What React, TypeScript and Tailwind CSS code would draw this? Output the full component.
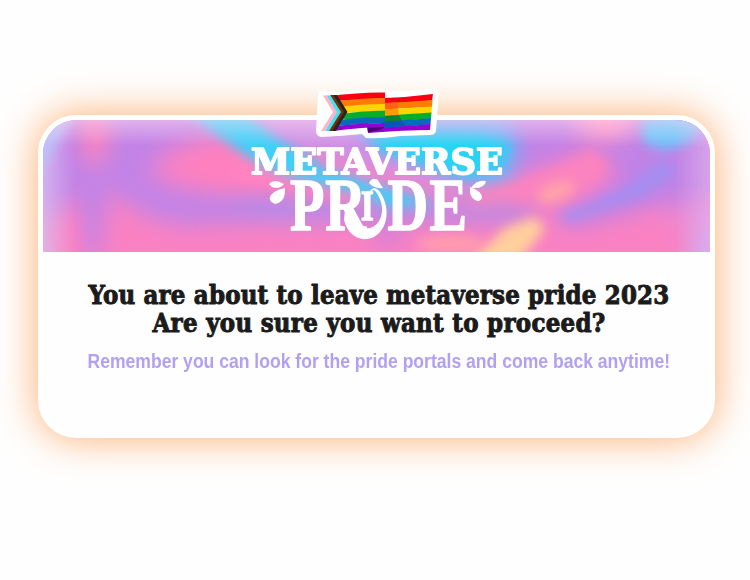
const Backdrop = () => (
  <svg className="block h-full w-full" viewBox="43 120 667 132" preserveAspectRatio="none" aria-hidden="true">
    <defs>
      <filter id="soft" x="-50%" y="-50%" width="200%" height="200%" colorInterpolationFilters="sRGB"><feGaussianBlur stdDeviation="11" /></filter>
      <filter id="mid" x="-50%" y="-50%" width="200%" height="200%" colorInterpolationFilters="sRGB"><feGaussianBlur stdDeviation="6" /></filter>
      <linearGradient id="leftEdge" x1="0" x2="1"><stop stopColor="#d8c0f2" stopOpacity=".75" /><stop offset="1" stopColor="#d8c0f2" stopOpacity="0" /></linearGradient>
      <linearGradient id="rightEdge" x1="1" x2="0"><stop stopColor="#e4b8ee" stopOpacity=".6" /><stop offset="1" stopColor="#e4b8ee" stopOpacity="0" /></linearGradient>
      <linearGradient id="topEdge" x1="0" x2="0" y1="0" y2="1"><stop stopColor="#ffe0f2" stopOpacity=".5" /><stop offset="1" stopColor="#ffe0f2" stopOpacity="0" /></linearGradient>
    </defs>
    <rect x="43" y="120" width="667" height="132" fill="#fa82c3" />
    <g filter="url(#soft)">
      <path d="M30 100H330V150L230 132Q165 142 150 172Q165 192 250 195Q330 200 390 210L330 220L250 222L190 226Q135 220 110 188L98 260H86L76 190L62 215H30Z" fill="#c283e6" />
      <path d="M215 212Q270 195 300 198L480 207Q530 207 545 205L520 222L400 220L300 219Z" fill="#a68cf0" />
      <path d="M500 100H730V205L660 205L580 227L550 222L620 178L590 150L520 175L480 180Z" fill="#c282e6" />
      <path d="M325 110H505L520 150L505 192L420 182L370 160L310 145Z" fill="#75aff8" />
      <ellipse cx="232" cy="172" rx="48" ry="18" fill="#ff80bd" />
      <ellipse cx="95" cy="135" rx="13" ry="32" fill="#ff83bd" />
      <ellipse cx="68" cy="245" rx="15" ry="40" fill="#ff80bf" />
      <path d="M660 210L720 195V240L680 240Z" fill="#ed87cf" />
      <path d="M700 230L725 215V265H690Z" fill="#c59cf0" />
      <ellipse cx="605" cy="115" rx="30" ry="26" fill="#ff93c6" />
      <ellipse cx="388" cy="236" rx="14" ry="7" fill="#ba7fe6" />
    </g>
    <g filter="url(#mid)">
      <path d="M178 104H233L275 137L335 172L400 192L440 206L390 207L328 190L263 166Q225 142 178 104Z" fill="#3ed0f9" />
      <path d="M238 104H325L375 150L445 180L410 182L335 158L276 136Z" fill="#cf90e6" />
      <path d="M295 145L340 158L425 180L480 189L455 194L380 183L320 167Z" fill="#ee84cb" />
      <path d="M240 164L330 187L380 200L350 202L295 189L230 178Z" fill="#ff83c1" />
      <path d="M370 138L420 132L480 134L512 143L500 170L465 176L425 163L380 152Z" fill="#28d4f4" />
      <path d="M470 192L520 182L565 165L590 150L612 165L580 190L530 199L475 202Z" fill="#fb83be" />
      <path d="M642 118L712 108L695 140L668 150L644 144Z" fill="#68c6fb" />
      <path d="M554 215L590 204L628 186L662 157L680 172L644 197L604 210L572 222Z" fill="#a68df0" />
      <ellipse cx="556" cy="192" rx="20" ry="9" transform="rotate(-20 556 192)" fill="#ffa3a8" />
      <path d="M465 268L505 228L535 217L545 229L527 252L506 270Z" fill="#ffcf9c" />
      <ellipse cx="450" cy="244" rx="34" ry="9" fill="#ff9dae" />
    </g>
    <rect x="43" y="120" width="32" height="132" fill="url(#leftEdge)" />
    <path d="M35 112H78Q52 140 35 190Z" fill="#b4c8fd" opacity=".8" filter="url(#mid)" />
    <rect x="674" y="120" width="36" height="132" fill="url(#rightEdge)" />
    <rect x="43" y="120" width="667" height="26" fill="url(#topEdge)" />
  </svg>
);

const Flag = () => (
  <svg className="block h-[52px] w-[126px]" viewBox="314 88 126 52" aria-label="Pride flag">
    <path d="M320 91L346 92Q366 88 387 90V91Q410 92 433 89Q440 90 439 93L436 131Q435 135 430 135L400 136Q380 139 366 138L362 134Q343 136 321 137Q316 136 316 131L318 95Q318 92 320 91Z" fill="#fff" />
    <path d="M385 98Q410 97 433 94L432 100.500Q410 102 385 104Z" fill="#f80012" />
    <path d="M385 103Q410 102 432.500 100L432 107Q410 108 384.500 109Z" fill="#ff7b05" />
    <path d="M384.500 109Q410 108 432 106.500L431.500 113Q410 114 384 116Z" fill="#ffd400" />
    <path d="M384 115.500Q410 114 431.500 112.500L431 118.500Q410 120 384 122Z" fill="#09ae28" />
    <path d="M384 121Q410 120 431 118L430.500 124.500Q410 126 383 128Z" fill="#0969bd" />
    <path d="M368 133L383 127Q410 126 430.500 124L430 130Q405 130 368 133Z" fill="#9400d3" />
    <path d="M367 127L389 122L382 129L368 133Z" fill="#4a0074" />
    <path d="M385 103L396 102.500L398 109L384.500 109.500Z" fill="#ff6214" />
    <path d="M384.500 109L398 108.500L399 115L384 116Z" fill="#ff9c00" />
    <path d="M384 116L399 115L402 121L384 122Z" fill="#08862e" />
    <path d="M384 121.500L402 120.500L405 126L384 128Z" fill="#0757b4" />
    <path d="M330 96Q361 92 385 92.500V98Q360 100 334 101Z" fill="#f80012" />
    <path d="M334 101.500Q360 98 385 98V104.500Q360 106 340 107Z" fill="#ff7b05" />
    <path d="M339 107Q360 104 385 104V110.500Q360 112 344 113Z" fill="#ffd400" />
    <path d="M345 113.500Q360 111 385 110.500V117Q360 119 343 119.500Z" fill="#09ae28" />
    <path d="M343 119.500Q362 117 385 117L384.500 123Q361 124 339 125.500Z" fill="#0969bd" />
    <path d="M339 125.500Q362 123 384.500 123L384 127Q365 127 333 131Z" fill="#9400d3" />
    <path d="M333 95H337L347.500 112L336 131H331L342 112Z" fill="#2c2224" />
    <path d="M330 95H333.500L344 112L332 131H328L339 112Z" fill="#753107" />
    <path d="M326.500 95.500H330.500L341 112L329 131H325L336 112Z" fill="#40e4ee" />
    <path d="M323 95.500H327L337 112L325 131H321L333 112Z" fill="#ffb3cb" />
  </svg>
);

const Wordmark = () => (
  <svg className="block h-[106px] w-[270px] overflow-visible" viewBox="243 140 270 106" fill="#fff">
    <text y="174" x="251" textLength="252" lengthAdjust="spacingAndGlyphs" fontFamily="DejaVu Serif, serif" fontWeight="700" fontSize="36" stroke="#fff" strokeWidth="1.800" strokeLinejoin="round">METAVERSE</text>
    <g transform="scale(.76 1)">
      <text x="381.600 428 475 510 565" y="230.500" fontFamily="Liberation Serif, serif" fontWeight="700" fontSize="74" stroke="#fff" strokeWidth="1.600" strokeLinejoin="round">
        PR<tspan fontSize="43" y="220">I</tspan><tspan y="230.500">DE</tspan>
      </text>
    </g>
    <path d="M345 210C350 226 361 230 370 228C382 225 387 207 376 192C373 188 370 192 369 195C370 187 376 186 380 192C391 208 388 229 374 237C361 243 348 236 344 220Z" />
    <path d="M369 183C371 178 377 177 379 182L383 188Q374 189 369 183Z" />
    <path d="M269 184Q274 178 284 184Q279 190 272 187Z" />
    <path d="M285 188Q286 202 275 204Q267 201 271 195Q275 190 285 188Z" />
    <path d="M471 188Q477 179 486 181Q485 189 471 188Z" />
    <path d="M470 187Q482 191 482 198Q480 203 475 200Q469 197 470 187Z" />
  </svg>
);

export default function App() {
  return (
    <main className="flex h-[580px] w-[750px] items-start overflow-hidden bg-[#fefefe] pl-[38px] pt-[115px]">
      <section className="relative flex h-[323px] w-[677px] flex-col rounded-[38px] border-[5px] border-white bg-[#fefefe] shadow-[0_0_40px_#ffad6e]">
        <header className="relative h-[132px] overflow-hidden rounded-t-[34px]">
          <Backdrop />
          <div className="absolute left-[200px] top-[20px]"><Wordmark /></div>
        </header>
        <div className="absolute left-[271px] top-[-32px]"><Flag /></div>
        <div className="flex flex-col items-center pl-[5px] pt-[29px] text-center">
          <h1 className="flex flex-col items-center whitespace-nowrap font-['DejaVu_Serif_Condensed','DejaVu_Serif',serif] text-[25.5px] font-bold leading-[28px] text-[#1b1b1b] [-webkit-text-stroke:0.9px_#1b1b1b]">
            <span className="tracking-[0.2px]">You are about to leave metaverse pride 2023</span>
            <span className="tracking-[0.3px]">Are you sure you want to proceed?</span>
          </h1>
          <p className="mt-[9px] origin-center scale-x-[0.878] whitespace-nowrap font-['Liberation_Sans',sans-serif] text-[20px] font-bold leading-[30px] text-[#b2a1f1]">
            Remember you can look for the pride portals and come back anytime!
          </p>
        </div>
      </section>
    </main>
  );
}
